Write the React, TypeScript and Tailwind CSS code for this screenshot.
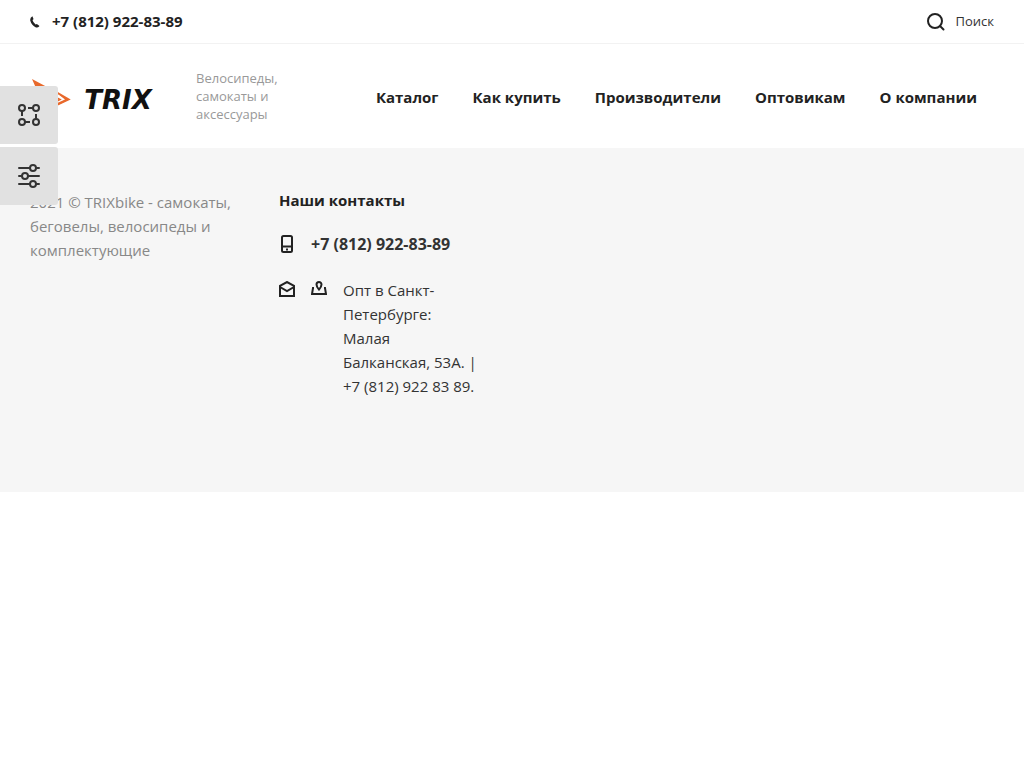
import React from "react";

const navItems = [
  { label: "Каталог", href: "#catalog" },
  { label: "Как купить", href: "#how-to-buy" },
  { label: "Производители", href: "#brands" },
  { label: "Оптовикам", href: "#wholesale" },
  { label: "О компании", href: "#about" },
];

function HandsetIcon() {
  return (
    <svg width="10" height="12" viewBox="0 0 10 12" fill="#222" aria-hidden="true">
      <path d="M2.4 0.2 L3.5 2.9 Q3.6 3.3 3.2 3.6 L2.5 4.1 Q3.2 6.8 5.6 8.6 L6.4 8.2 Q6.8 7.9 7.2 8.2 L9.2 9.8 Q9.5 10.1 9.1 10.5 Q7.7 12 6 11.4 Q1.6 9.5 0.3 4.7 Q-0.3 1.6 2.4 0.2Z" />
    </svg>
  );
}

function SearchIcon() {
  return (
    <svg width="18" height="18" viewBox="0 0 18 18" fill="none" stroke="#222" strokeWidth="2" strokeLinecap="round" aria-hidden="true">
      <circle cx="8" cy="8" r="7" />
      <path d="M13 13l3.5 3.5" />
    </svg>
  );
}

function CompareIcon() {
  return (
    <svg width="22" height="22" viewBox="0 0 22 22" fill="none" stroke="#333" strokeWidth="2" aria-hidden="true">
      <circle cx="4" cy="4" r="3" />
      <circle cx="18" cy="4" r="3" />
      <circle cx="4" cy="18" r="3" />
      <circle cx="18" cy="18" r="3" />
      <path d="M4 7v5M10 4h5M7 18h5M18 15v-5" />
    </svg>
  );
}

function SlidersIcon() {
  return (
    <svg width="22" height="24" viewBox="0 0 22 24" fill="none" stroke="#333" strokeWidth="2" strokeLinecap="round" aria-hidden="true">
      <circle cx="15" cy="4" r="3" />
      <circle cx="7" cy="12" r="3" />
      <circle cx="15" cy="20" r="3" />
      <path d="M1 4h11M18 4h3M1 12h3M10 12h11M1 20h11M18 20h3" />
    </svg>
  );
}

function PhoneIcon() {
  return (
    <svg width="16" height="18" viewBox="0 0 16 18" fill="none" stroke="#222" strokeWidth="2" aria-hidden="true">
      <rect x="3" y="1" width="10" height="16" rx="1.5" />
      <path d="M3 11.500h10" />
      <path d="M7 14.5h2" />
    </svg>
  );
}

function MailIcon() {
  return (
    <svg width="16" height="16" viewBox="0 0 16 16" fill="none" stroke="#222" strokeWidth="2" aria-hidden="true">
      <path d="M1 15V4.8L8 1l7 3.8V15z" />
      <path d="M1 6l7 4 7-4" />
    </svg>
  );
}

function PinIcon() {
  return (
    <svg width="16" height="14" viewBox="0 0 16 14" fill="none" stroke="#222" strokeWidth="2" aria-hidden="true">
      <path d="M8 8.500C6.200 6.500 5.500 5.200 5.500 3.500a2.500 2.500 0 0 1 5 0C10.500 5.200 9.800 6.500 8 8.500z" />
      <path d="M3 7H2L1 13h14l-1-6h-1" />
    </svg>
  );
}

function Logo() {
  return (
    <svg width="136" height="42" viewBox="0 0 136 42" role="img" aria-label="TRIX">
      <path d="M2 4L17 12 39 24.500 8 40l5-11z" fill="#e8692c" />
      <path d="M20 17l4-1 11 8.500-11 5 4-5z" fill="#fff" />
      <path d="M27 17.500l12 7-12 5.500M27 23l3 1.500-3 1.500" fill="none" stroke="#e8692c" strokeWidth="1.6" />
      <text x="88" y="34" textAnchor="middle" className="text-[26px] font-bold italic" fontFamily="DejaVu Sans, sans-serif" fill="#111">
        TRIX
      </text>
    </svg>
  );
}

export default function App() {
  return (
    <div className="relative bg-white font-['Open_Sans','Noto_Sans',sans-serif] text-[#222]">
      <div className="flex h-11 items-center justify-between border-b border-[#f2f2f2] px-[30px]">
        <a href="tel:+78129228389" className="flex items-center gap-3 text-[15px] font-bold">
          <HandsetIcon />
          +7 (812) 922-83-89
        </a>
        <button type="button" className="flex items-center gap-[11px] text-[13px] text-[#333]">
          <SearchIcon />
          Поиск
        </button>
      </div>

      <header className="flex h-[104px] items-center px-[30px]">
        <a href="#home" className="shrink-0">
          <Logo />
        </a>
        <p className="ml-[30px] w-[100px] text-[13px] leading-[18px] text-[#999]">
          Велосипеды, самокаты и аксессуары
        </p>
        <nav className="ml-auto flex gap-[34px] pt-[2px] pr-[17px] text-[15px] font-bold">
          {navItems.map((item) => (
            <a key={item.href} href={item.href} className="whitespace-nowrap">
              {item.label}
            </a>
          ))}
        </nav>
      </header>

      <footer className="flex gap-[33px] bg-[#f6f6f6] px-[30px] pt-10 pb-[94px] text-[15px] leading-6">
        <p className="w-[216px] pt-[2px] text-[#888]">
          2021 © TRIXbike - самокаты, беговелы, велосипеды и комплектующие
        </p>
        <section className="w-[200px]">
          <h2 className="font-bold">Наши контакты</h2>
          <a href="tel:+78129228389" className="mt-5 flex items-center gap-4 text-base leading-6 font-bold whitespace-nowrap text-[#333]">
            <PhoneIcon />
            +7 (812) 922-83-89
          </a>
          <div className="mt-[22px] flex gap-4">
            <span className="pt-[3px]">
              <MailIcon />
            </span>
            <span className="pt-[3px]">
              <PinIcon />
            </span>
            <address className="text-[#333] not-italic">
              Опт в Санкт-Петербурге: Малая Балканская, 53А. | +7 (812) 922 83 89.
            </address>
          </div>
        </section>
      </footer>

      <aside className="absolute top-[86px] left-0 flex flex-col gap-[3px]">
        <button type="button" aria-label="Сравнение" className="flex size-[58px] items-center justify-center rounded-r-[3px] bg-[#e1e1e1]">
          <CompareIcon />
        </button>
        <button type="button" aria-label="Настройки" className="flex size-[58px] items-center justify-center rounded-r-[3px] bg-[#e1e1e1]">
          <SlidersIcon />
        </button>
      </aside>
    </div>
  );
}
